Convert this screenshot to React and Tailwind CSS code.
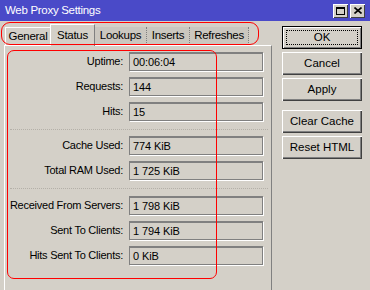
import React from "react";

const rows1 = [
  ["Uptime:", "00:06:04"],
  ["Requests:", "144"],
  ["Hits:", "15"],
];
const rows2 = [
  ["Cache Used:", "774 KiB"],
  ["Total RAM Used:", "1 725 KiB"],
];
const rows3 = [
  ["Received From Servers:", "1 798 KiB"],
  ["Sent To Clients:", "1 794 KiB"],
  ["Hits Sent To Clients:", "0 KiB"],
];

const Field = ({ label, value }) => (
  <div className="flex items-center h-[19px]">
    <div className="w-[119px] text-right pr-[1px] tracking-[-0.25px] whitespace-nowrap">{label}</div>
    <div className="ml-[5px] w-[134px] h-[19px] border border-[#808080] border-t-2 shadow-[1px_1px_0_#fff] pl-[3px] flex items-center tracking-[-0.1px]">
      {value}
    </div>
  </div>
);

const Sep = () => (
  <div className="ml-[5px] w-[258px] border-t border-dotted border-[#b4b0a8]" />
);

const Btn = ({ children, ok }) => (
  <div
    className={
      "w-[80px] h-[23px] flex items-center justify-center text-[11.5px] " +
      (ok
        ? "border border-black shadow-[inset_1px_1px_#fff,inset_-1px_-1px_#808080]"
        : "shadow-[inset_1px_1px_#fff,inset_-1px_-1px_#404040,inset_-2px_-2px_#808080]")
    }
  >
    {ok ? (
      <div className="w-[72px] h-[15px] border border-dotted border-black flex items-center justify-center">
        {children}
      </div>
    ) : (
      children
    )}
  </div>
);

export default function App() {
  return (
    <div className="relative w-[370px] h-[290px] overflow-hidden bg-[#d4d0c8] text-[11px] text-black font-['Liberation_Sans',Arial,sans-serif]">
      {/* title bar */}
      <div className="h-[21px] bg-[#4a4ac8] flex items-center pl-[5px] pr-[5px]">
        <span className="text-white text-[11.5px] tracking-[-0.3px]">Web Proxy Settings</span>
        <div className="ml-auto flex gap-[2px]">
          <div className="w-[15px] h-[14px] bg-[#d4d0c8] shadow-[inset_1px_1px_#fff,inset_-1px_-1px_#404040] flex items-center justify-center">
            <div className="w-[9px] h-[8px] border border-black border-t-2" />
          </div>
          <div className="w-[15px] h-[14px] bg-[#d4d0c8] shadow-[inset_1px_1px_#fff,inset_-1px_-1px_#404040] flex items-center justify-center">
            <svg width="8" height="7" viewBox="0 0 8 7">
              <path d="M0.5 0.5 L7.5 6.5 M7.5 0.5 L0.5 6.5" stroke="#000" strokeWidth="1.6" />
            </svg>
          </div>
        </div>
      </div>

      <div className="flex">
        {/* left: tabs and panel */}
        <div className="w-[272px] pl-[4px]">
          <div className="h-[24px] flex items-end pl-[1px] text-[11.5px] tracking-[-0.3px]">
            <div className="h-[18px] w-[45px] flex items-center justify-center border-t border-l border-white">General</div>
            <div className="h-[22px] w-[45px] flex items-center justify-center border-t border-l border-white border-r border-r-[#808080] bg-[#d4d0c8] relative top-[1px]">Status</div>
            <div className="h-[18px] w-[52px] flex items-center justify-center bg-[#cbc7bf] border-r border-dotted border-[#808080]">Lookups</div>
            <div className="h-[18px] w-[43px] flex items-center justify-center bg-[#cbc7bf] border-r border-dotted border-[#808080]">Inserts</div>
            <div className="h-[18px] w-[59px] flex items-center justify-center bg-[#cbc7bf] border-r border-dotted border-[#808080]">Refreshes</div>
          </div>
          <div className="h-[260px] border-l border-t border-white border-r border-r-[#808080] pt-[6px] flex flex-col">
            <div className="flex flex-col gap-[6px]">
              {rows1.map(([l, v]) => <Field key={l} label={l} value={v} />)}
            </div>
            <div className="mt-[8px] mb-[6px]"><Sep /></div>
            <div className="flex flex-col gap-[6px]">
              {rows2.map(([l, v]) => <Field key={l} label={l} value={v} />)}
            </div>
            <div className="mt-[8px] mb-[7px]"><Sep /></div>
            <div className="flex flex-col gap-[6px]">
              {rows3.map(([l, v]) => <Field key={l} label={l} value={v} />)}
            </div>
          </div>
        </div>

        {/* right: buttons */}
        <div className="ml-[10px] pt-[5px] flex flex-col gap-[3px]">
          <Btn ok>OK</Btn>
          <Btn>Cancel</Btn>
          <Btn>Apply</Btn>
          <div className="mt-[6px]"><Btn>Clear Cache</Btn></div>
          <Btn>Reset HTML</Btn>
        </div>
      </div>

      {/* red annotation outlines */}
      <div className="absolute left-[1px] top-[22px] w-[258px] h-[23px] border-[1.5px] border-[#ff0000] rounded-[9px] pointer-events-none" />
      <div className="absolute left-[7px] top-[50px] w-[210px] h-[229px] border border-[#ff0000] rounded-[7px] pointer-events-none" />
    </div>
  );
}
